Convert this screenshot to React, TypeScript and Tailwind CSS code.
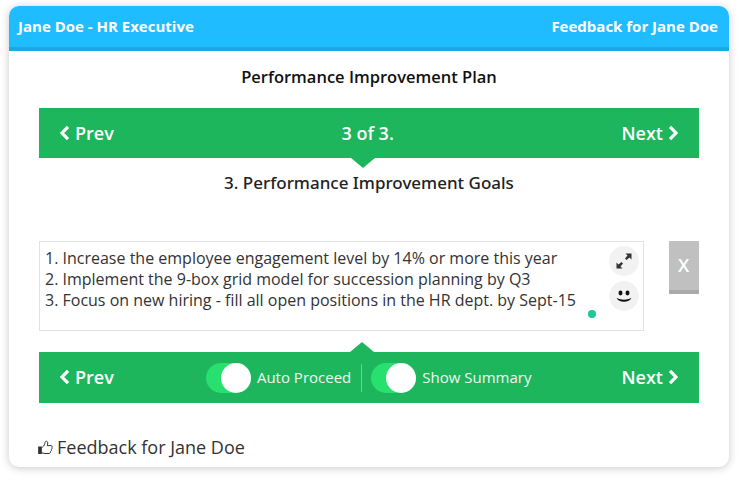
function ChevLeft() {
  return (
    <svg width="11" height="16" viewBox="0 0 11 16" fill="none">
      <path d="M9 1.800 L3 8 L9 14.200" stroke="white" strokeWidth="3.200" />
    </svg>
  );
}

function ChevRight() {
  return (
    <svg width="11" height="16" viewBox="0 0 11 16" fill="none">
      <path d="M2 1.800 L8 8 L2 14.200" stroke="white" strokeWidth="3.200" />
    </svg>
  );
}

function ThumbsUp() {
  return (
    <svg width="15" height="15" viewBox="0 0 15 15" fill="none" stroke="#333" strokeWidth="1">
      <rect x="0.700" y="7" width="2.600" height="6.500" fill="#333" />
      <path d="M3.500 7.500 C5 7 6.500 5.500 6.800 3.500 C7 2 7.500 1 8.500 1.200 C10 1.500 10 3.500 9.200 5.600 L13 5.600 C14.200 5.600 14.500 6.800 14 7.600 C14.300 8.400 14 9.200 13.400 9.600 C13.600 10.400 13.300 11.200 12.600 11.500 C12.700 12.600 12 13.500 11 13.500 L7 13.500 C5.500 13.500 4.500 12.800 3.500 12.600" />
    </svg>
  );
}

function Nav({ dir }: { dir: "prev" | "next" }) {
  return dir === "prev" ? (
    <div className="flex items-center gap-[5px] text-[18px] font-semibold text-white leading-none -mt-[1px]">
      <ChevLeft />
      <span>Prev</span>
    </div>
  ) : (
    <div className="flex items-center gap-[5px] text-[18px] font-semibold text-white leading-none -mt-[1px]">
      <span>Next</span>
      <ChevRight />
    </div>
  );
}

function Toggle({ label }: { label: string }) {
  return (
    <div className="flex items-center gap-[6px]">
      <div className="relative w-[45px] h-[30px] rounded-full bg-[#28e06e]">
        <div className="absolute right-0 top-0 w-[30px] h-[30px] rounded-full bg-white" />
      </div>
      <span className="text-[15px] text-[#f0f8f2] leading-none">{label}</span>
    </div>
  );
}

export default function App() {
  return (
    <div className="w-[738px] h-[479px] bg-white pt-[6px] px-[9px] font-['Open_Sans','Noto_Sans',sans-serif] overflow-hidden">
      <div className="w-[720px] h-[461px] rounded-[10px] bg-white shadow-[0_1px_8px_rgba(0,0,0,0.22)] overflow-hidden flex flex-col">
        <div className="h-[45px] shrink-0 bg-[#1fbcff] border-b-[4px] border-[#1ca9e2] flex items-center justify-between pl-[9px] pr-[11px] text-white font-bold text-[15px]">
          <span>Jane Doe - HR Executive</span>
          <span>Feedback for Jane Doe</span>
        </div>
        <div className="flex flex-col px-[30px]">
          <div className="h-[57px] flex items-center justify-center text-[16.500px] font-semibold text-[#111] pb-[4px]">
            Performance Improvement Plan
          </div>
          <div className="relative h-[50px] bg-[#1db65c] flex items-center justify-between px-[20px]">
            <Nav dir="prev" />
            <span className="text-[18px] font-semibold text-white leading-none -mt-[1px]">3 of 3.</span>
            <Nav dir="next" />
            <div className="absolute left-[312px] top-[50px] w-0 h-0 border-l-[12px] border-r-[12px] border-t-[10px] border-l-transparent border-r-transparent border-t-[#1db65c]" />
          </div>
          <div className="h-[50px] flex items-center justify-center font-['Noto_Sans','Open_Sans',sans-serif] text-[17px] font-medium text-[#222]">
            3. Performance Improvement Goals
          </div>
          <div className="h-[33px]" />
          <div className="flex items-start justify-between">
            <div className="relative w-[605px] h-[90px] border border-[#e2e2e2] pl-[5px] pt-[6px] text-[16px] leading-[21px] text-[#333]">
              <div>1. Increase the employee engagement level by 14% or more this year</div>
              <div>2. Implement the 9-box grid model for succession planning by Q3</div>
              <div>3. Focus on new hiring - fill all open positions in the HR dept. by Sept-15</div>
              <div className="absolute left-[569px] top-[4px] w-[30px] h-[30px] rounded-full bg-[#f2f2f2] flex items-center justify-center">
                <svg width="16" height="16" viewBox="0 0 16 16" fill="#333">
                  <path d="M15.500 0.500 L15.500 6.500 L13.500 4.500 L10.500 7 L9 5.500 L11.500 2.500 L9.500 0.500 Z" />
                  <path d="M0.500 15.500 L0.500 9.500 L2.500 11.500 L5.500 9 L7 10.500 L4.500 13.500 L6.500 15.500 Z" />
                </svg>
              </div>
              <div className="absolute left-[569px] top-[39px] w-[30px] h-[30px] rounded-full bg-[#f2f2f2] flex items-center justify-center">
                <svg width="18" height="18" viewBox="0 0 18 18">
                  <ellipse cx="3.800" cy="6" rx="2" ry="2.400" fill="#111" transform="translate(1.700 0)" />
                  <ellipse cx="14.200" cy="6" rx="2" ry="2.400" fill="#111" transform="translate(-1.700 0)" />
                  <path d="M1.500 10.800 C4 12.300 6.500 12.700 9 12.700 C11.500 12.700 14 12.300 16.500 10.800 C15.500 13.500 12.500 14.800 9 14.800 C5.500 14.800 2.500 13.500 1.500 10.800 Z" fill="#111" />
                </svg>
              </div>
              <div className="absolute left-[548px] top-[68px] w-[8px] h-[8px] rounded-full bg-[#1cc79a]" />
            </div>
            <div className="w-[30px] h-[53px] bg-[#c0c0c0] border-b-[4px] border-[#aaaaaa] flex items-center justify-center text-white font-semibold text-[18px]">
              <span className="-ml-[1px]">X</span>
            </div>
          </div>
          <div className="relative mt-[21px] h-[51px] bg-[#1db65c] flex items-center justify-between px-[20px]">
            <div className="absolute left-[311px] -top-[10px] w-0 h-0 border-l-[12px] border-r-[12px] border-b-[10px] border-l-transparent border-r-transparent border-b-[#1db65c]" />
            <Nav dir="prev" />
            <div className="flex items-center ml-[2px]">
              <Toggle label="Auto Proceed" />
              <div className="w-px h-[28px] bg-[#6fd095] ml-[10px] mr-[9px]" />
              <Toggle label="Show Summary" />
            </div>
            <Nav dir="next" />
          </div>
          <div className="flex items-center gap-[4px] mt-[30px] -ml-px text-[18px] leading-[28px] text-[#333]">
            <ThumbsUp />
            <span>Feedback for Jane Doe</span>
          </div>
        </div>
      </div>
    </div>
  );
}
